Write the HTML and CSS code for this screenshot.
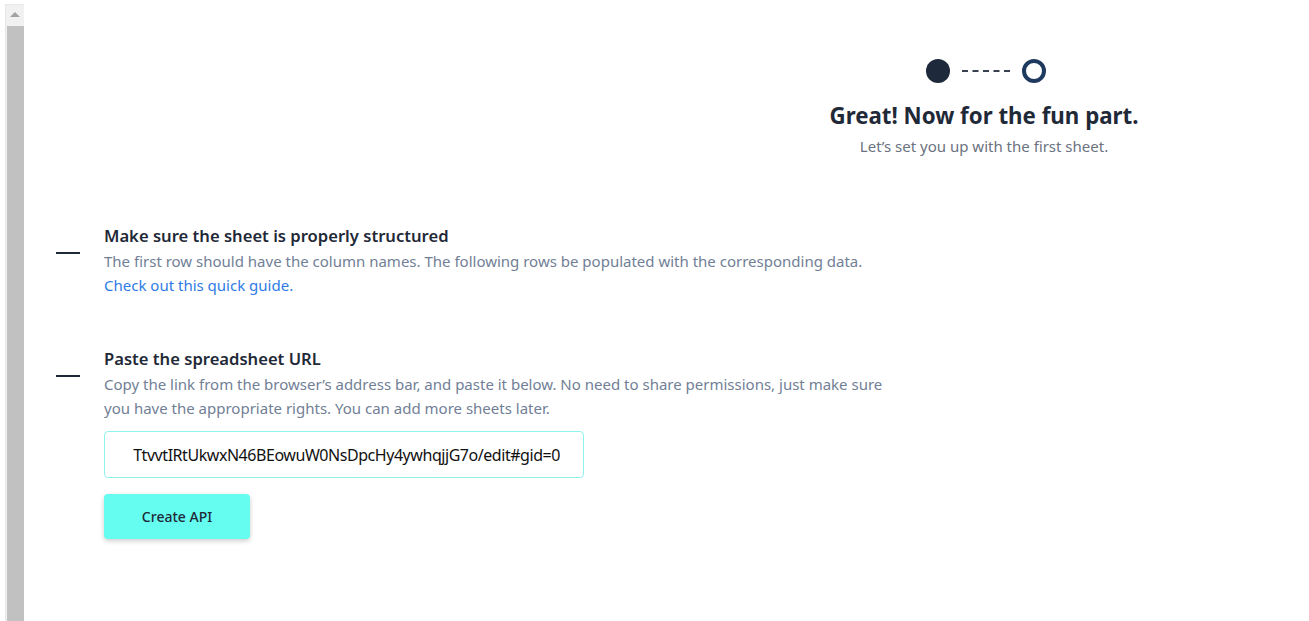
FILE: index.html
```html
<!DOCTYPE html>
<html lang="en">
<head>
    <meta charset="UTF-8">
    <meta name="viewport" content="width=device-width, initial-scale=1.0">
    <title>Create API</title>
    <link rel="stylesheet" href="styles.css">
</head>
<body>
    <!-- fake scrollbar on the left -->
    <div class="scrollbar">
        <div class="scroll-arrow"></div>
        <div class="scroll-thumb"></div>
    </div>

    <div class="page">
        <div class="header-row">
            <div class="header">
                <div class="steps">
                    <span class="dot done"></span>
                    <span class="dashes"></span>
                    <span class="dot current"></span>
                </div>
                <h1>Great! Now for the fun part.</h1>
                <p class="subtitle">Let’s set you up with the first sheet.</p>
            </div>
        </div>

        <div class="step">
            <span class="marker"></span>
            <div class="step-body">
                <h2>Make sure the sheet is properly structured</h2>
                <p>The first row should have the column names. The following rows be populated with the corresponding data.<br>
                <a href="#">Check out this quick guide.</a></p>
            </div>
        </div>

        <div class="step second">
            <span class="marker"></span>
            <div class="step-body">
                <h2>Paste the spreadsheet URL</h2>
                <p class="wide">Copy the link from the browser’s address bar, and paste it below. No need to share permissions, just make sure you have the appropriate rights. You can add more sheets later.</p>
                <div class="url-input">
                    <div class="url-text"><span>TtvvtIRtUkwxN46BEowuW0NsDpcHy4ywhqjjG7o/edit#gid=0</span></div>
                </div>
                <button class="create-btn">Create API</button>
            </div>
        </div>
    </div>
</body>
</html>
```

FILE: styles.css
```css
body {
    margin: 0;
    font-family: "Noto Sans", "Open Sans", sans-serif;
    background: #fff;
    color: #1f2937;
    display: flex;
    height: 621px;
    overflow: hidden;
}
.scrollbar {
    width: 18px;
    margin: 4px 0 0 5px;
    background: #f1f1f1;
    border-left: 1px solid #e6e6e6;
    border-top: 1px solid #e6e6e6;
    display: flex;
    flex-direction: column;
    align-items: center;
}
.scroll-arrow {
    margin-top: 7px;
    width: 0;
    height: 0;
    border-left: 5px solid transparent;
    border-right: 5px solid transparent;
    border-bottom: 5px solid #a3a3a3;
}
.scroll-thumb {
    margin-top: 9px;
    width: 17px;
    flex: 1;
    background: #c1c1c1;
}
.page {
    flex: 1;
    padding-top: 59px;
}
.header-row {
    display: flex;
    justify-content: flex-end;
}
.header {
    width: 650px;
    text-align: center;
}
.steps {
    display: flex;
    justify-content: center;
    align-items: center;
    gap: 12px;
    margin-left: 4px;
}
.dot {
    width: 24px;
    height: 24px;
    border-radius: 50%;
    box-sizing: border-box;
}
.dot.done {
    background: #1e293b;
}
.dot.current {
    border: 4px solid #1e3a5f;
}
.dashes {
    width: 48px;
    border-top: 2px dashed #374151;
}
h1 {
    font-size: 22.3px;
    font-weight: 700;
    margin: 18px 0 3px;
    line-height: 30px;
}
.subtitle {
    margin: 0;
    font-size: 15px;
    color: #6b7280;
    line-height: 24px;
}
.step {
    display: flex;
    margin-top: 65px;
    padding-left: 32px;
}
.step.second {
    margin-top: 49px;
}
.marker {
    width: 24px;
    height: 2px;
    background: #1f2937;
    margin-top: 29px;
    margin-right: 24px;
}
h2 {
    font-size: 16.6px;
    font-weight: 600;
    margin: 0;
    line-height: 26px;
}
.step-body p {
    margin: 0;
    font-size: 15px;
    line-height: 24px;
    color: #718096;
}
.step-body p.wide {
    max-width: 790px;
}
a {
    color: #2f7be6;
    text-decoration: none;
}
.url-input {
    margin-top: 11px;
    width: 480px;
    height: 47px;
    box-sizing: border-box;
    border: 1px solid #8ff5ec;
    border-radius: 4px;
    padding: 0 23px 0 24px;
    display: flex;
    align-items: center;
}
.url-text {
    flex: 1;
    overflow: hidden;
    display: flex;
    justify-content: flex-end;
    white-space: nowrap;
    font-size: 16px;
    letter-spacing: -0.45px;
    color: #111;
}
.create-btn {
    display: block;
    margin-top: 16px;
    width: 146px;
    height: 45px;
    border: none;
    border-radius: 4px;
    background: #64fdf0;
    color: #1f2937;
    font-family: inherit;
    font-size: 14px;
    font-weight: 500;
    box-shadow: 0 2px 5px rgba(0, 0, 0, 0.2);
    cursor: pointer;
}
```
